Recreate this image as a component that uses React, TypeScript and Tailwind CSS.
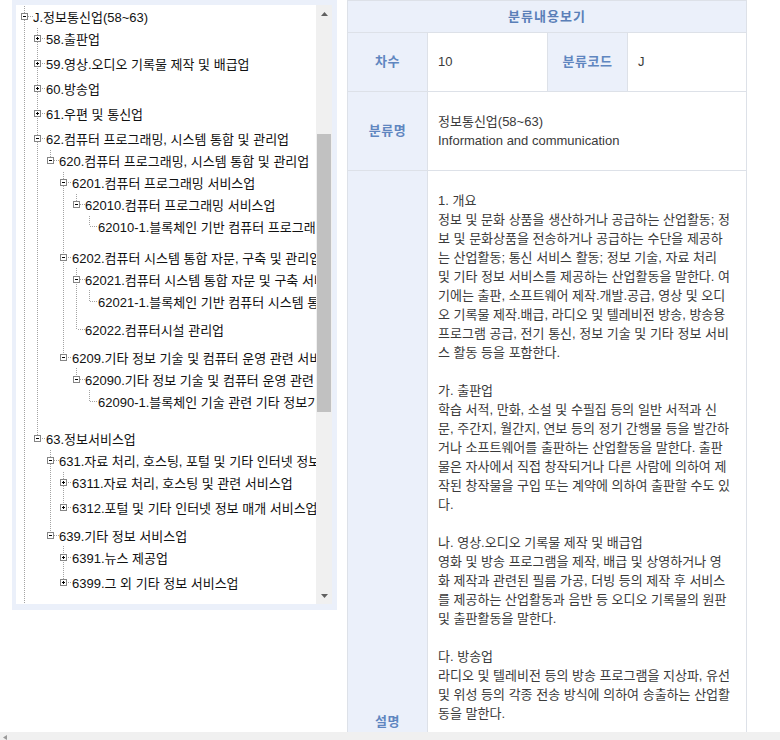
import React from "react";

type State = "open" | "closed" | "leaf";
type TNode = { label: string; state: State; children?: TNode[] };

const tree: TNode[] = [
  {
    label: "J.정보통신업(58~63)",
    state: "open",
    children: [
      { label: "58.출판업", state: "closed" },
      { label: "59.영상.오디오 기록물 제작 및 배급업", state: "closed" },
      { label: "60.방송업", state: "closed" },
      { label: "61.우편 및 통신업", state: "closed" },
      {
        label: "62.컴퓨터 프로그래밍, 시스템 통합 및 관리업",
        state: "open",
        children: [
          {
            label: "620.컴퓨터 프로그래밍, 시스템 통합 및 관리업",
            state: "open",
            children: [
              {
                label: "6201.컴퓨터 프로그래밍 서비스업",
                state: "open",
                children: [
                  {
                    label: "62010.컴퓨터 프로그래밍 서비스업",
                    state: "open",
                    children: [
                      { label: "62010-1.블록체인 기반 컴퓨터 프로그래밍 서비스업", state: "leaf" },
                    ],
                  },
                ],
              },
              {
                label: "6202.컴퓨터 시스템 통합 자문, 구축 및 관리업",
                state: "open",
                children: [
                  {
                    label: "62021.컴퓨터 시스템 통합 자문 및 구축 서비스업",
                    state: "open",
                    children: [
                      { label: "62021-1.블록체인 기반 컴퓨터 시스템 통합 자문 및 구축 서비스업", state: "leaf" },
                    ],
                  },
                  { label: "62022.컴퓨터시설 관리업", state: "leaf" },
                ],
              },
              {
                label: "6209.기타 정보 기술 및 컴퓨터 운영 관련 서비스업",
                state: "open",
                children: [
                  {
                    label: "62090.기타 정보 기술 및 컴퓨터 운영 관련 서비스업",
                    state: "open",
                    children: [
                      { label: "62090-1.블록체인 기술 관련 기타 정보기술 및 컴퓨터 운영 서비스업", state: "leaf" },
                    ],
                  },
                ],
              },
            ],
          },
        ],
      },
      {
        label: "63.정보서비스업",
        state: "open",
        children: [
          {
            label: "631.자료 처리, 호스팅, 포털 및 기타 인터넷 정보매개 서비스업",
            state: "open",
            children: [
              { label: "6311.자료 처리, 호스팅 및 관련 서비스업", state: "closed" },
              { label: "6312.포털 및 기타 인터넷 정보 매개 서비스업", state: "closed" },
            ],
          },
          {
            label: "639.기타 정보 서비스업",
            state: "open",
            children: [
              { label: "6391.뉴스 제공업", state: "closed" },
              { label: "6399.그 외 기타 정보 서비스업", state: "closed" },
            ],
          },
        ],
      },
    ],
  },
];

type Row = {
  label: string;
  level: number;
  state: State;
  anc: boolean[];
  hasNext: boolean;
  extra: number;
  top: number;
};

function flatten(nodes: TNode[], level: number, anc: boolean[], rows: Row[]) {
  nodes.forEach((n, i) => {
    const hasNext = i < nodes.length - 1 || level === 0;
    rows.push({ label: n.label, level, state: n.state, anc, hasNext, extra: 0, top: 0 });
    if (n.state === "open" && n.children) flatten(n.children, level + 1, [...anc, hasNext], rows);
    rows[rows.length - 1].extra += 3;
  });
}

const rows: Row[] = [];
flatten(tree, 0, [], rows);
{
  let y = 5;
  rows.forEach((r) => {
    r.top = y;
    y += 22 + r.extra;
  });
}

const LINE = "#a3a3a3";

function VLine({ x, y0, y1, top }: { x: number; y0: number; y1: number; top: number }) {
  if (y1 <= y0) return null;
  const phase = (top + y0) % 2;
  return (
    <line
      x1={x + 0.5}
      y1={y0}
      x2={x + 0.5}
      y2={y1}
      stroke={LINE}
      strokeWidth={1}
      strokeDasharray="1 1"
      strokeDashoffset={phase}
      shapeRendering="crispEdges"
    />
  );
}

function HLine({ x0, x1, y }: { x0: number; x1: number; y: number }) {
  const phase = (18 + x0) % 2;
  return (
    <line
      x1={x0}
      y1={y + 0.5}
      x2={x1}
      y2={y + 0.5}
      stroke={LINE}
      strokeWidth={1}
      strokeDasharray="1 1"
      strokeDashoffset={phase}
      shapeRendering="crispEdges"
    />
  );
}

function TreeRow({ r }: { r: Row }) {
  const h = 22 + r.extra;
  const w = 13 * r.level + 15;
  const cx = 13 * r.level + 6;
  const hasBox = r.state !== "leaf";
  return (
    <div className="flex shrink-0" style={{ height: h }}>
      <svg width={w} height={h} className="shrink-0 block">
        {r.anc.map((a, k) => (a ? <VLine key={k} x={13 * k + 6} y0={0} y1={h} top={r.top} /> : null))}
        <VLine x={cx} y0={0} y1={hasBox ? 8 : 11} top={r.top} />
        {r.hasNext && <VLine x={cx} y0={hasBox ? 15 : 12} y1={h} top={r.top} />}
        <HLine x0={hasBox ? cx + 4 : cx + 1} x1={w} y={11} />
        {hasBox && (
          <g shapeRendering="crispEdges">
            <rect x={cx - 2.5} y={8.5} width={6} height={6} fill="#fff" stroke="#858585" strokeWidth={1} />
            <line x1={cx - 1} y1={11.5} x2={cx + 2} y2={11.5} stroke="#000" strokeWidth={1} />
            {r.state === "closed" && (
              <line x1={cx + 0.5} y1={10} x2={cx + 0.5} y2={13} stroke="#000" strokeWidth={1} />
            )}
          </g>
        )}
      </svg>
      <span className="h-[22px] mt-[2px] leading-[22px] whitespace-nowrap text-[13px] text-[#111]">{r.label}</span>
    </div>
  );
}

const desc: string[] = [
  "1. 개요",
  "정보 및 문화 상품을 생산하거나 공급하는 산업활동; 정",
  "보 및 문화상품을 전송하거나 공급하는 수단을 제공하",
  "는 산업활동; 통신 서비스 활동; 정보 기술, 자료 처리",
  "및 기타 정보 서비스를 제공하는 산업활동을 말한다. 여",
  "기에는 출판, 소프트웨어 제작.개발.공급, 영상 및 오디",
  "오 기록물 제작.배급, 라디오 및 텔레비전 방송, 방송용",
  "프로그램 공급, 전기 통신, 정보 기술 및 기타 정보 서비",
  "스 활동 등을 포함한다.",
  "",
  "가. 출판업",
  "학습 서적, 만화, 소설 및 수필집 등의 일반 서적과 신",
  "문, 주간지, 월간지, 연보 등의 정기 간행물 등을 발간하",
  "거나 소프트웨어를 출판하는 산업활동을 말한다. 출판",
  "물은 자사에서 직접 창작되거나 다른 사람에 의하여 제",
  "작된 창작물을 구입 또는 계약에 의하여 출판할 수도 있",
  "다.",
  "",
  "나. 영상.오디오 기록물 제작 및 배급업",
  "영화 및 방송 프로그램을 제작, 배급 및 상영하거나 영",
  "화 제작과 관련된 필름 가공, 더빙 등의 제작 후 서비스",
  "를 제공하는 산업활동과 음반 등 오디오 기록물의 원판",
  "및 출판활동을 말한다.",
  "",
  "다. 방송업",
  "라디오 및 텔레비전 등의 방송 프로그램을 지상파, 유선",
  "및 위성 등의 각종 전송 방식에 의하여 송출하는 산업활",
  "동을 말한다.",
  "",
  "라. 우편 및 통신업",
  "우편물, 소포 등의 수집, 운송 및 배달과 유선, 무선 및",
  "위성 통신 서비스를 제공하는 산업활동을 말한다.",
];

const FONT = "font-['Liberation_Sans','Noto_Sans_CJK_KR',sans-serif]";

export default function App() {
  return (
    <div className={`w-[780px] h-[740px] overflow-hidden flex flex-col bg-white ${FONT}`}>
      <div className="h-[732px] overflow-hidden flex items-start shrink-0">
        {/* Left tree panel */}
        <div className="ml-[12px] w-[325px] h-[610px] bg-[#ebf0fa] pt-[5px] pl-[4px] pr-[5px] pb-[6px] shrink-0">
          <div className="flex h-[599px] bg-white">
            <div className="w-[300px] h-full overflow-hidden pl-[2px] flex flex-col">
              {rows.map((r, i) => (
                <TreeRow key={i} r={r} />
              ))}
            </div>
            <div className="w-[16px] h-full bg-[#f0f0f0] flex flex-col">
              <div className="h-[17px] flex items-center justify-center">
                <svg width="7" height="4" className="block">
                  <path d="M0 4 L3.5 0 L7 4 Z" fill="#606060" />
                </svg>
              </div>
              <div className="h-[112px]" />
              <div className="h-[278px] ml-[1px] mr-[1px] bg-[#c1c1c1]" />
              <div className="flex-1" />
              <div className="h-[17px] flex items-center justify-center">
                <svg width="7" height="4" className="block">
                  <path d="M0 0 L3.5 4 L7 0 Z" fill="#606060" />
                </svg>
              </div>
            </div>
          </div>
        </div>

        {/* Right detail table */}
        <div className="ml-[10px] w-[400px] border-l border-t border-[#dde1e8] shrink-0 text-[13px]">
          <div className="h-[32px] border-r border-b border-[#dde1e8] bg-[#ebf0fa] flex items-center justify-center font-bold text-[#5a7fb8] tracking-[1px]">
            분류내용보기
          </div>
          <div className="flex h-[59px]">
            <div className="w-[80px] border-r border-b border-[#dde1e8] bg-[#ebf0fa] flex items-center justify-center font-bold text-[#5f86c0] tracking-[0.5px]">
              차수
            </div>
            <div className="w-[120px] border-r border-b border-[#dde1e8] flex items-center pl-[10px] text-[#3a3a3a]">
              10
            </div>
            <div className="w-[80px] border-r border-b border-[#dde1e8] bg-[#ebf0fa] flex items-center justify-center font-bold text-[#5f86c0] tracking-[0.5px]">
              분류코드
            </div>
            <div className="w-[119px] border-r border-b border-[#dde1e8] flex items-center pl-[10px] text-[#3a3a3a]">
              J
            </div>
          </div>
          <div className="flex h-[79px]">
            <div className="w-[80px] border-r border-b border-[#dde1e8] bg-[#ebf0fa] flex items-center justify-center font-bold text-[#5f86c0] tracking-[0.5px]">
              분류명
            </div>
            <div className="w-[319px] border-r border-b border-[#dde1e8] flex flex-col justify-center pl-[10px] pb-[1px] text-[#3a3a3a] leading-[19px]">
              <div>정보통신업(58~63)</div>
              <div>Information and communication</div>
            </div>
          </div>
          <div className="flex h-[1103px]">
            <div className="w-[80px] border-r border-b border-[#dde1e8] bg-[#ebf0fa] flex items-center justify-center font-bold text-[#5f86c0] tracking-[0.5px]">
              설명
            </div>
            <div className="w-[319px] border-r border-b border-[#dde1e8] pt-[20px] pl-[10px] text-[#3a3a3a] leading-[19px]">
              {desc.map((l, i) => (
                <div key={i} className="h-[19px] whitespace-pre">
                  {l === "" ? " " : l}
                </div>
              ))}
            </div>
          </div>
        </div>
      </div>
      <div className="h-[8px] bg-[#f0f0f0] flex items-end pl-[3px] shrink-0">
        <svg width="4" height="5" className="block">
          <path d="M0 2.5 L4 0 L4 5 Z" fill="#9a9a9a" />
        </svg>
      </div>
    </div>
  );
}
